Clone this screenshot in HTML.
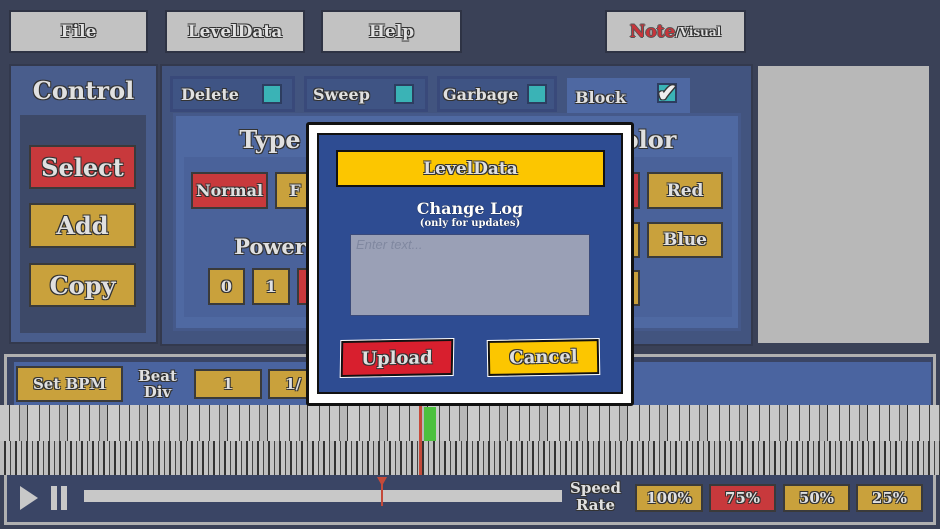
<!DOCTYPE html>
<html><head><meta charset="utf-8"><style>
*{margin:0;padding:0;box-sizing:border-box}
body{width:940px;height:529px;background:#3a4157;position:relative;overflow:hidden;font-family:"DejaVu Serif","Liberation Serif",serif;font-weight:bold}
.a{position:absolute}
.t{color:#e0e0e0;text-shadow:-1px -1px 0 #333,1px -1px 0 #333,-1px 1px 0 #333,1px 1px 0 #333;display:flex;align-items:center;justify-content:center}
.gb{background:#c2c2c2;border:2px solid #2e3344;font-size:17px}
.gold{background:#c9a13c;border:2px solid #3a3a3a}
.red{background:#c8393c;border:2px solid #3a3a3a}
.chk{width:20px;height:20px;background:#3ab3b6;border:2px solid #2d3d60}
.tab{background:#3f5484;border:3px solid #39497a}
</style></head><body>
<div class="a t gb" style="left:9px;top:10px;width:139px;height:43px">File</div>
<div class="a t gb" style="left:165px;top:10px;width:140px;height:43px">LevelData</div>
<div class="a t gb" style="left:321px;top:10px;width:141px;height:43px">Help</div>
<div class="a t gb" style="left:605px;top:10px;width:141px;height:43px"><span style="color:#c8343a;text-shadow:-1px 0 #555,1px 0 #555,0 1px #555,0 -1px #555">Note</span><span style="font-size:12px">/Visual</span></div>

<div class="a" style="left:9px;top:64px;width:149px;height:280px;background:#495d8c;border:2px solid #33394d"></div>
<div class="a t" style="left:10px;top:72px;width:147px;height:36px;font-size:24px">Control</div>
<div class="a" style="left:20px;top:115px;width:126px;height:218px;background:#3d4968"></div>
<div class="a t red" style="left:29px;top:145px;width:107px;height:44px;font-size:24px">Select</div>
<div class="a t gold" style="left:29px;top:203px;width:107px;height:45px;font-size:24px">Add</div>
<div class="a t gold" style="left:29px;top:263px;width:107px;height:44px;font-size:24px">Copy</div>

<div class="a" style="left:160px;top:64px;width:593px;height:282px;background:#42547f;border:2px solid #33394d"></div>
<div class="a t tab" style="left:170px;top:76px;width:125px;height:36px;font-size:16px;justify-content:flex-start;padding-left:8px">Delete<div class="chk" style="position:absolute;left:89px;top:5px"></div></div>
<div class="a t tab" style="left:304px;top:76px;width:124px;height:36px;font-size:16px;justify-content:flex-start;padding-left:6px">Sweep<div class="chk" style="position:absolute;left:87px;top:5px"></div></div>
<div class="a t tab" style="left:437px;top:76px;width:120px;height:36px;font-size:16px;justify-content:flex-start;padding-left:3px">Garbage<div class="chk" style="position:absolute;left:87px;top:5px"></div></div>
<div class="a t" style="left:567px;top:78px;width:123px;height:38px;background:#4e68a2;font-size:16px;justify-content:flex-start;padding-left:8px">Block<div class="chk" style="position:absolute;left:90px;top:5px"></div><span style="position:absolute;left:90px;top:0;font-size:24px;color:#eee">✔</span></div>
<div class="a" style="left:173px;top:113px;width:568px;height:218px;background:#4f69a2;border:3px solid #45598a"></div>
<div class="a" style="left:184px;top:157px;width:548px;height:160px;background:#4a629a"></div>
<div class="a t" style="left:230px;top:124px;width:80px;height:30px;font-size:24px">Type</div>
<div class="a t" style="left:225px;top:232px;width:90px;height:28px;font-size:21px">Power</div>
<div class="a t" style="left:600px;top:124px;width:80px;height:30px;font-size:24px">Color</div>
<div class="a t red" style="left:191px;top:172px;width:77px;height:37px;font-size:16px">Normal</div>
<div class="a t gold" style="left:275px;top:172px;width:40px;height:37px;font-size:16px">F</div>
<div class="a t gold" style="left:208px;top:268px;width:37px;height:37px;font-size:16px">0</div>
<div class="a t gold" style="left:252px;top:268px;width:38px;height:37px;font-size:16px">1</div>
<div class="a red" style="left:297px;top:268px;width:20px;height:37px"></div>
<div class="a red" style="left:620px;top:172px;width:20px;height:37px"></div>
<div class="a gold" style="left:620px;top:222px;width:20px;height:36px"></div>
<div class="a gold" style="left:620px;top:270px;width:20px;height:36px"></div>
<div class="a t gold" style="left:647px;top:172px;width:76px;height:37px;font-size:17px">Red</div>
<div class="a t gold" style="left:647px;top:222px;width:76px;height:36px;font-size:17px">Blue</div>
<div class="a" style="left:758px;top:66px;width:171px;height:277px;background:#b8b8b8"></div>

<div class="a" style="left:4px;top:354px;width:932px;height:171px;background:#3a4565;border:3px solid #b0b0b0"></div>
<div class="a" style="left:14px;top:362px;width:917px;height:44px;background:#4a64a0"></div>
<div class="a t gold" style="left:16px;top:366px;width:107px;height:36px;font-size:15px">Set BPM</div>
<div class="a t" style="left:135px;top:366px;width:45px;height:36px;font-size:15px;line-height:16px;text-align:center">Beat<br>Div</div>
<div class="a t gold" style="left:194px;top:369px;width:68px;height:30px;font-size:15px">1</div>
<div class="a t gold" style="left:268px;top:369px;width:50px;height:30px;font-size:15px">1/</div>
<div class="a" style="left:0;top:405px;width:940px;height:37px;background:repeating-linear-gradient(90deg,#c6c6c6 0 9px,#3a3a3a 9px 10px,#c8c8c8 10px 19px,#555 19px 20px,#b8b8b8 20px 27px,#333 27px 28px,#cbcbcb 28px 39px,#444 39px 40px)"></div>
<div class="a" style="left:0;top:441px;width:940px;height:34px;background:repeating-linear-gradient(90deg,#bdbdbd 0 4px,#333 4px 6px,#c4c4c4 6px 10px,#444 10px 11px)"></div>
<div class="a" style="left:424px;top:407px;width:12px;height:34px;background:#4cc13e"></div>
<div class="a" style="left:419px;top:405px;width:3px;height:70px;background:#c44a3a"></div>
<div class="a" style="left:8px;top:475px;width:923px;height:42px;background:#3a4565"></div>
<svg class="a" style="left:18px;top:484px" width="52" height="28"><polygon points="2,2 20,14 2,26" fill="#c8c8c8"/><rect x="33" y="2" width="6" height="24" fill="#c8c8c8"/><rect x="43" y="2" width="6" height="24" fill="#c8c8c8"/></svg>
<div class="a" style="left:84px;top:490px;width:478px;height:12px;background:#c8c8c8"></div>
<svg class="a" style="left:376px;top:476px" width="12" height="30"><polygon points="1,1 11,1 6,10" fill="#c44a3a"/><rect x="5" y="8" width="2" height="22" fill="#c44a3a"/></svg>
<div class="a t" style="left:568px;top:479px;width:55px;height:36px;font-size:15px;line-height:17px;text-align:center">Speed<br>Rate</div>
<div class="a t gold" style="left:635px;top:484px;width:68px;height:28px;font-size:15px">100%</div>
<div class="a t red" style="left:709px;top:484px;width:67px;height:28px;font-size:15px">75%</div>
<div class="a t gold" style="left:783px;top:484px;width:67px;height:28px;font-size:15px">50%</div>
<div class="a t gold" style="left:856px;top:484px;width:67px;height:28px;font-size:15px">25%</div>

<div class="a" style="left:306px;top:122px;width:328px;height:284px;background:#fff;border:3px solid #111;border-radius:3px"></div>
<div class="a" style="left:317px;top:133px;width:306px;height:261px;background:#2e4c92;border:2px solid #111"></div>
<div class="a t" style="left:336px;top:150px;width:269px;height:37px;background:#fcc600;border:2px solid #111;font-size:17px">LevelData</div>
<div class="a" style="left:330px;top:199px;width:280px;text-align:center;color:#fff;font-size:16px;text-shadow:0 0 1px #000">Change Log</div>
<div class="a" style="left:330px;top:218px;width:280px;text-align:center;color:#fff;font-size:10px;text-shadow:0 0 1px #000">(only for updates)</div>
<div class="a" style="left:350px;top:234px;width:240px;height:82px;background:#9aa0b6;border:1px solid #3a4a7a;font-family:'Liberation Sans',sans-serif;font-weight:normal;font-style:italic;color:#8088a0;font-size:13px;padding:2px 5px">Enter text...</div>
<div class="a t" style="left:341px;top:340px;width:112px;height:36px;background:#d81f2e;border:2px solid #111;outline:1px solid #fff;font-size:18px;transform:skewX(-2deg) rotate(-1deg)">Upload</div>
<div class="a t" style="left:488px;top:340px;width:111px;height:35px;background:#fcc600;border:2px solid #111;outline:1px solid #fff;font-size:18px;transform:rotate(-1deg)">Cancel</div>
</body></html>
